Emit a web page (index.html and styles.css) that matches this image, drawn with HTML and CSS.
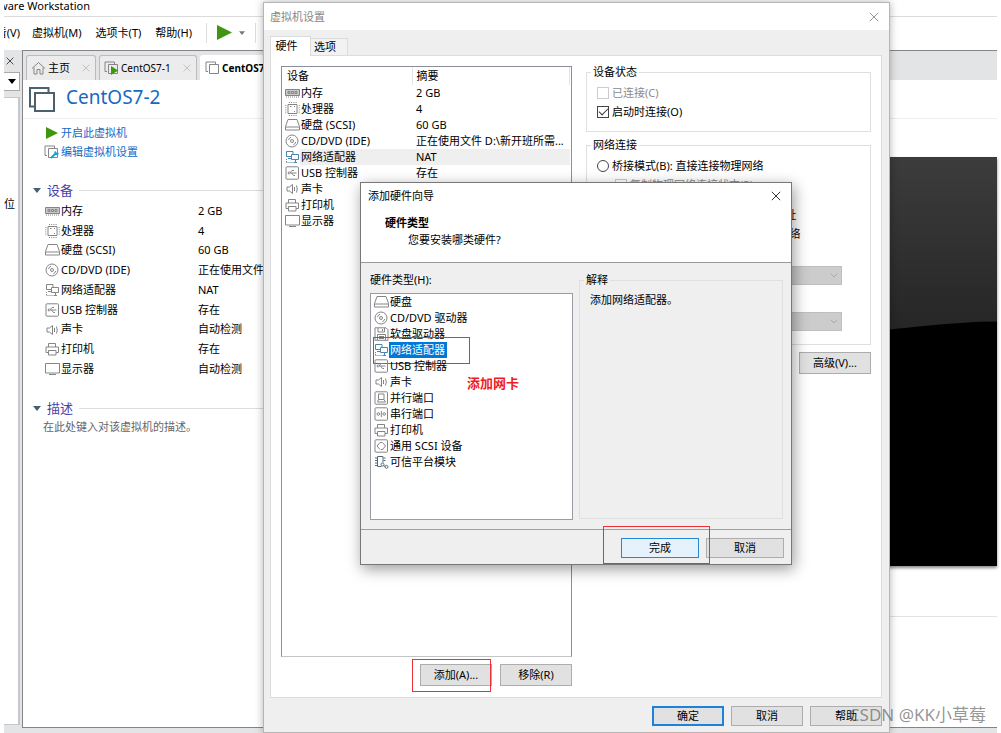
FILE: index.html
```html
<!DOCTYPE html>
<html lang="zh-CN">
<head>
<meta charset="utf-8">
<title>VMware Workstation</title>
<link rel="stylesheet" href="styles.css">
</head>
<body>
<svg class="defs" aria-hidden="true">
  <defs>
    <symbol id="i-mem" viewBox="0 0 15 14"><path d="M.5 3.500h14v6h-14z" fill="#c9c9c9"/><path d="M3 5.500h2v2h-2zM6.500 5.500h2v2h-2zM10 5.500h2v2h-2z"/><path d="M1 11h13" stroke-dasharray="1 1"/></symbol>
    <symbol id="i-cpu" viewBox="0 0 15 14"><path d="M3 2.500h9v9h-9z"/><path d="M4 .5h8M4 13.500h8M.8 3v9M14.200 3v9" stroke-dasharray="1 1.200"/><path d="M5 4.500h1.500M9 4.500h1M9 9.500h1"/></symbol>
    <symbol id="i-disk" viewBox="0 0 15 14"><path d="M3 1.500h9l2.500 7v3.500h-14v-3.500zM.5 9h14"/></symbol>
    <symbol id="i-cd" viewBox="0 0 15 14"><circle cx="7" cy="7" r="6"/><circle cx="7" cy="7" r="1.500"/><path d="M3.500 6a4 4 0 0 1 2.500-2.800M10.800 8a4 4 0 0 1-2.500 2.800"/></symbol>
    <symbol id="i-net" viewBox="0 0 15 14"><path d="M1.500 1.500h6.500v5h-6.500zM3 8.500h3M9 12.500h3M10.500 9.500v3"/><path d="M6.500 4.500h7v5h-7z" fill="#fff"/><path d="M1.500 9v4M1.500 12.500h7" stroke-dasharray="1 1"/></symbol>
    <symbol id="i-usb" viewBox="0 0 15 14"><rect x="1" y=".8" width="12.500" height="12.400" rx="1"/><path d="M3.500 7h8M5 7l2-2.500h2M6.500 7l2 2.500h1.500M4 5.500l-1 1.500 1 1.500"/></symbol>
    <symbol id="i-snd" viewBox="0 0 15 14"><path d="M2 5h2.500l3-2.500v9l-3-2.500h-2.500zM9.500 5v4M11.500 3.500q1.500 3.500 0 7"/></symbol>
    <symbol id="i-prt" viewBox="0 0 15 14"><path d="M3.500 5v-3.500h7v3.500M3.500 10.500h-2.500v-5.500h12.500v5.500h-2.500M3.500 8.500h7.500v4.500h-7.500z"/></symbol>
    <symbol id="i-mon" viewBox="0 0 15 14"><path d="M.5 1.500h14v9.500h-14zM4 12.500h7"/></symbol>
    <symbol id="i-flop" viewBox="0 0 15 14"><path d="M1 .8h11l2 2v10.500h-13zM4 1v4h6.500v-4M8.500 2v2M3.500 13v-5.500h8v5.500M5 9.500h5M5 11.500h5"/></symbol>
    <symbol id="i-par" viewBox="0 0 15 14"><rect x="1" y=".8" width="12.500" height="12.400" rx="1"/><path d="M4.500 3h5.500v5.500h-5.500zM4.500 8.500l-1 2.500h8l-1.500-2.500"/></symbol>
    <symbol id="i-ser" viewBox="0 0 15 14"><rect x="1" y=".8" width="12.500" height="12.400" rx="1"/><circle cx="4.300" cy="7" r="1.300"/><circle cx="10.200" cy="7" r="1.300"/><path d="M7.300 4v6"/></symbol>
    <symbol id="i-scsi" viewBox="0 0 15 14"><rect x="1" y=".8" width="12.500" height="12.400" rx="1"/><path d="M6 3.500l-3 3.500 3 3.500M8.500 3.500l3 3.500-3 3.500M6 3.500h2M7 10.500h2"/></symbol>
    <symbol id="i-tpm" viewBox="0 0 15 14"><path d="M3.500 1.500h5.500v6M3.500 1.500v10h4M1 3h2M1 5.500h2M1 8h2M1 10.500h2M9.500 3h2M9.500 5.500h2"/><circle cx="8.500" cy="9.500" r="1.500"/><path d="M9.500 10.500l2 1.200"/><circle cx="12.500" cy="11.800" r="1.500"/></symbol>
    <symbol id="i-vm" viewBox="0 0 15 14"><path d="M3 10.500h-2v-9.500h9.500v2M4.500 3.500h9v9h-9z"/></symbol>
    <symbol id="i-home" viewBox="0 0 15 14"><path d="M1 7.500l6.500-6 6.500 6M3 6.500v6.500h3v-4.500h3v4.500h3v-6.500"/></symbol>
    <symbol id="i-x" viewBox="0 0 10 10"><path d="M.8.8l8.400 8.400M9.200.8l-8.400 8.400"/></symbol>
    <symbol id="i-play" viewBox="0 0 14 14"><path d="M0 0l14 7-14 7z"/></symbol>
    <symbol id="i-down" viewBox="0 0 8 5"><path d="M0 0h8l-4 5z"/></symbol>
    <symbol id="i-chev" viewBox="0 0 8 5"><path d="M.7.7l3.300 3.300 3.300-3.300"/></symbol>
  </defs>
</svg>

<div class="app">
  <header class="title"><span class="title-text">VMware Workstation</span></header>
  <nav class="menu">
    <span class="menu-cut"><button>查看(V)</button></span>
    <button class="item">虚拟机(M)</button>
    <button class="item">选项卡(T)</button>
    <button class="item">帮助(H)</button>
    <span class="power">
      <button aria-label="开启"><svg class="play-lg"><use href="#i-play"/></svg></button>
      <button aria-label="电源选项"><svg class="caret grey"><use href="#i-down"/></svg></button>
    </span>
  </nav>

  <div class="work">
    <aside class="side">
      <button class="side-close" aria-label="关闭"><svg class="x-sm"><use href="#i-x"/></svg></button>
      <button class="side-drop" aria-label="搜索选项"><svg class="caret"><use href="#i-down"/></svg></button>
      <div class="side-panel">位</div>
    </aside>

    <main class="main">
      <div class="tabs">
        <div class="tab home"><svg class="ico"><use href="#i-home"/></svg><span>主页</span><svg class="x-sm pale"><use href="#i-x"/></svg></div>
        <div class="tab vm"><svg class="ico"><use href="#i-vm"/><path class="run" d="M7 5l7 4.500-7 4.500z"/></svg><span class="small">CentOS7-1</span><svg class="x-sm pale"><use href="#i-x"/></svg></div>
        <div class="tab on"><svg class="ico"><use href="#i-vm"/></svg><b class="small">CentOS7-2</b></div>
      </div>
      <div class="vm-head">
        <svg class="vm-logo" viewBox="0 0 26 25"><path d="M5 19.500h-4v-18.500h18.500v4"/><path d="M6 6h19v18h-19z"/></svg>
        <h1>CentOS7-2</h1>
      </div>
      <div class="vm-body">
        <div class="info">
          <div class="links">
            <a href="#"><svg class="play-sm"><use href="#i-play"/></svg>开启此虚拟机</a>
            <a href="#"><svg class="ico"><use href="#i-vm"/><path class="wrench" d="M7 13l5-5M11 6.500l1 2.500 2.500-.5"/></svg>编辑虚拟机设置</a>
          </div>
          <h2><svg class="caret slate"><use href="#i-down"/></svg>设备</h2>
          <table class="devs">
            <tr><td><svg class="ico"><use href="#i-mem"/></svg>内存</td><td>2 GB</td></tr>
            <tr><td><svg class="ico"><use href="#i-cpu"/></svg>处理器</td><td>4</td></tr>
            <tr><td><svg class="ico"><use href="#i-disk"/></svg>硬盘 (SCSI)</td><td>60 GB</td></tr>
            <tr><td><svg class="ico"><use href="#i-cd"/></svg>CD/DVD (IDE)</td><td>正在使用文件 D:\</td></tr>
            <tr><td><svg class="ico"><use href="#i-net"/></svg>网络适配器</td><td>NAT</td></tr>
            <tr><td><svg class="ico"><use href="#i-usb"/></svg>USB 控制器</td><td>存在</td></tr>
            <tr><td><svg class="ico"><use href="#i-snd"/></svg>声卡</td><td>自动检测</td></tr>
            <tr><td><svg class="ico"><use href="#i-prt"/></svg>打印机</td><td>存在</td></tr>
            <tr><td><svg class="ico"><use href="#i-mon"/></svg>显示器</td><td>自动检测</td></tr>
          </table>
          <h2><svg class="caret slate"><use href="#i-down"/></svg>描述</h2>
          <p class="desc">在此处键入对该虚拟机的描述。</p>
        </div>
        <div class="preview">
          <svg class="screen" viewBox="0 0 400 410" preserveAspectRatio="none">
            <defs><linearGradient id="glare" x1="0" y1="0" x2="0" y2="1"><stop offset="0" stop-color="#3c3c3c"/><stop offset="1" stop-color="#1a1a1a"/></linearGradient></defs>
            <path d="M0 0h400v410h-400z"/>
            <path fill="url(#glare)" d="M0 0h400v165q-50 0-250 50l-150 50z"/>
          </svg>
          <div class="rule"></div>
        </div>
      </div>
    </main>
  </div>
</div>

<section class="win settings" role="dialog" aria-label="虚拟机设置">
  <header class="win-title"><span>虚拟机设置</span><button aria-label="关闭"><svg class="x-md"><use href="#i-x"/></svg></button></header>
  <div class="win-tabs"><button class="wt on">硬件</button><button class="wt">选项</button></div>
  <div class="panel">
    <div class="left">
      <div class="hw">
        <table>
          <thead><tr><th>设备</th><th>摘要</th></tr></thead>
          <tbody>
            <tr><td><svg class="ico"><use href="#i-mem"/></svg>内存</td><td>2 GB</td></tr>
            <tr><td><svg class="ico"><use href="#i-cpu"/></svg>处理器</td><td>4</td></tr>
            <tr><td><svg class="ico"><use href="#i-disk"/></svg>硬盘 (SCSI)</td><td>60 GB</td></tr>
            <tr><td><svg class="ico"><use href="#i-cd"/></svg>CD/DVD (IDE)</td><td>正在使用文件 D:\新开班所需...</td></tr>
            <tr class="sel"><td><svg class="ico blue"><use href="#i-net"/></svg>网络适配器</td><td>NAT</td></tr>
            <tr><td><svg class="ico"><use href="#i-usb"/></svg>USB 控制器</td><td>存在</td></tr>
            <tr><td><svg class="ico"><use href="#i-snd"/></svg>声卡</td><td></td></tr>
            <tr><td><svg class="ico"><use href="#i-prt"/></svg>打印机</td><td></td></tr>
            <tr><td><svg class="ico"><use href="#i-mon"/></svg>显示器</td><td></td></tr>
          </tbody>
        </table>
      </div>
      <div class="row-btns">
        <span class="marked"><button class="btn">添加(A)...</button><i class="mark mark-add"></i></span>
        <button class="btn">移除(R)</button>
      </div>
    </div>
    <div class="right">
      <fieldset class="state">
        <legend>设备状态</legend>
        <label class="off"><input type="checkbox" disabled>已连接(C)</label>
        <label><input type="checkbox" checked>启动时连接(O)</label>
      </fieldset>
      <fieldset class="conn">
        <legend>网络连接</legend>
        <label><input type="radio" name="net">桥接模式(B): 直接连接物理网络</label>
        <label class="off sub"><input type="checkbox" disabled>复制物理网络连接状态(P)</label>
        <label><input type="radio" name="net" checked>NAT 模式(N):&nbsp; 用于共享主机的 IP 地址</label>
        <label><input type="radio" name="net">仅主机模式(H):&nbsp; 与主机共享的专用网络</label>
        <label><input type="radio" name="net" aria-label="自定义"></label>
        <span class="pick"><select disabled aria-label="特定虚拟网络"></select><svg><use href="#i-chev"/></svg></span>
        <label><input type="radio" name="net" aria-label="LAN 区段"></label>
        <span class="pick"><select disabled aria-label="LAN 区段"></select><svg><use href="#i-chev"/></svg></span>
      </fieldset>
      <div class="row-btns"><button class="btn" aria-label="LAN 区段"></button><button class="btn">高级(V)...</button></div>
    </div>
  </div>
  <footer class="win-foot"><button class="btn ok">确定</button><button class="btn">取消</button><button class="btn">帮助</button></footer>
</section>

<section class="win wizard" role="dialog" aria-label="添加硬件向导">
  <header class="wiz-head">
    <div class="wiz-title"><span>添加硬件向导</span><button aria-label="关闭"><svg class="x-md"><use href="#i-x"/></svg></button></div>
    <h3>硬件类型</h3>
    <p>您要安装哪类硬件?</p>
  </header>
  <div class="wiz-body">
    <div class="types">
      <div id="types-label" class="types-label">硬件类型(H):</div>
      <ul role="listbox" aria-labelledby="types-label">
        <li role="option"><svg class="ico"><use href="#i-disk"/></svg><span>硬盘</span></li>
        <li role="option"><svg class="ico"><use href="#i-cd"/></svg><span>CD/DVD 驱动器</span></li>
        <li role="option"><svg class="ico"><use href="#i-flop"/></svg><span>软盘驱动器</span></li>
        <li role="option" class="picked" aria-selected="true"><svg class="ico blue"><use href="#i-net"/></svg><span>网络适配器</span><i class="mark mark-net"></i></li>
        <li role="option"><svg class="ico"><use href="#i-usb"/></svg><span>USB 控制器</span></li>
        <li role="option"><svg class="ico"><use href="#i-snd"/></svg><span>声卡</span><strong class="note">添加网卡</strong></li>
        <li role="option"><svg class="ico"><use href="#i-par"/></svg><span>并行端口</span></li>
        <li role="option"><svg class="ico"><use href="#i-ser"/></svg><span>串行端口</span></li>
        <li role="option"><svg class="ico"><use href="#i-prt"/></svg><span>打印机</span></li>
        <li role="option"><svg class="ico"><use href="#i-scsi"/></svg><span>通用 SCSI 设备</span></li>
        <li role="option"><svg class="ico slate-line"><use href="#i-tpm"/></svg><span>可信平台模块</span></li>
      </ul>
    </div>
    <fieldset class="explain"><legend>解释</legend>添加网络适配器。</fieldset>
  </div>
  <footer class="wiz-foot">
    <span class="marked"><button class="btn hot">完成</button><i class="mark mark-done"></i></span>
    <button class="btn">取消</button>
  </footer>
</section>

<div class="watermark">CSDN @KK小草莓</div>
</body>
</html>
```
FILE: styles.css
```css
* { box-sizing: border-box; }
html, body { height: 100%; }
body {
  margin: 0;
  position: relative;
  overflow: hidden;
  background: #fff;
  color: #000;
  font: 11px/16px "Noto Sans", "Noto Sans CJK SC", sans-serif;
}
button, select, input { font: inherit; color: inherit; margin: 0; }
button { padding: 0; border: 0; background: none; white-space: nowrap; }
h1, h2, h3, p, ul { margin: 0; padding: 0; font-weight: normal; }
ul { list-style: none; }
table { border-collapse: collapse; }
td, th { padding: 0; text-align: left; font-weight: normal; white-space: nowrap; }
svg { display: block; flex: none; fill: none; stroke: #858585; }
.defs { position: absolute; width: 0; height: 0; }
.ico { width: 15px; height: 14px; }
.ico.blue { stroke: #4a86b4; }
.ico.slate-line { stroke: #566b7a; }
td .ico { display: inline-block; vertical-align: middle; margin: -2px 1px 0 0; }
.x-sm { width: 8px; height: 8px; stroke: #222; }
.x-sm.pale { stroke: #b8b8b8; }
.x-md { width: 10px; height: 10px; stroke: #333; }
.caret { width: 8px; height: 5px; fill: #000; stroke: none; }
.caret.grey { width: 6px; height: 4px; fill: #777; }
.caret.slate { fill: #46606e; }
.play-lg { width: 15px; height: 15px; fill: #3f9612; stroke: none; }
.play-sm { width: 14px; height: 12px; fill: #3f9612; stroke: none; }
.run { fill: #3f9612; stroke: none; }
.wrench { stroke: #12a5d8; stroke-width: 2; }

/* Main window */
.app { height: 100%; padding: 0 4px; display: flex; flex-direction: column; }
.title { height: 17px; border-bottom: 1px solid #dcdcdc; }
.title-text { display: flex; justify-content: flex-end; width: 86px; height: 13px; line-height: 12px; overflow: hidden; white-space: nowrap; }
.menu { display: flex; align-items: center; gap: 12px; height: 33px; padding-bottom: 2px; }
.menu-cut { display: flex; justify-content: flex-end; width: 16px; overflow: hidden; }
.item { padding-right: 2px; }
.power { display: flex; align-items: center; gap: 7px; height: 20px; padding: 0 10px; border: solid #ddd; border-width: 0 1px; }
.work { flex: 1; display: flex; min-height: 0; padding-bottom: 5px; background: #e3e4e6; }
.side { width: 16px; display: flex; flex-direction: column; padding-bottom: 3px; }
.side-close { height: 22px; padding: 0 0 0 2px; }
.side-drop { display: grid; place-items: center; height: 19px; border: 1px solid #aaa; border-left: 0; background: #fff; }
.side-panel { flex: 1; margin-top: 6px; padding-top: 98px; border: solid #c5c8cd; border-width: 1px 2px 1px 0; background: #fff; }
.main { flex: 1; min-width: 0; margin-left: 2px; display: flex; flex-direction: column; border: 1px solid #858589; border-right: 0; background: #fff; }
.tabs { display: flex; gap: 3px; height: 29px; padding: 4px 3px 0; background: #e3e4e6; }
.tab { display: flex; align-items: center; gap: 2px; padding: 0 5px 0 4px; border: 1px solid #bbb; border-bottom: 0; border-radius: 3px 3px 0 0; background: #ececec; white-space: nowrap; }
.tab .x-sm { margin-left: auto; }
.tab.home { width: 70px; }
.tab.vm { width: 98px; }
.tab.on { width: 110px; background: #fff; border-color: #fff; }
.small { font-size: 10px; }
.vm-head { display: flex; align-items: center; gap: 11px; height: 39px; padding-left: 6px; border-bottom: 1px solid #eee; }
.vm-logo { width: 26px; height: 25px; stroke: #4d606d; stroke-width: 2; }
h1 { font-size: 19px; line-height: 24px; color: #1668c7; padding-bottom: 4px; }
.vm-body { flex: 1; display: flex; }
.info { width: 300px; padding: 4px 0 0 10px; }
.links { display: flex; flex-direction: column; padding-left: 12px; }
.links a { display: flex; align-items: center; gap: 2px; height: 19px; color: #1668c7; text-decoration: none; white-space: nowrap; }
.links .ico { margin-right: 0; margin-left: -1px; }
h2 { display: flex; align-items: center; gap: 6px; font-size: 13px; line-height: 20px; color: #4a3fa8; }
h2::after { content: ""; flex: 1; height: 1px; background: #ddd; }
.links + h2 { margin-top: 19px; }
.devs { height: 178px; margin: 1px 0 19px 12px; }
.devs td:first-child { width: 153px; }
.desc { padding: 1px 0 0 10px; color: #666; }
.preview { flex: 1; padding-top: 38px; }
.screen { width: 100%; height: 409px; fill: #000; stroke: none; box-shadow: 0 2px 3px #888; }
.rule { margin-top: 50px; height: 1px; background: #e2e2e2; }

/* Dialogs */
.win { position: absolute; display: flex; flex-direction: column; background: #efefef; }
.btn { height: 22px; width: 72px; border: 1px solid #adadad; background: #e1e1e1; text-align: center; overflow: hidden; }
.btn.ok { border: 2px solid #1c83d9; }
.btn.hot { border: 1px solid #2488d8; background: #e5f1fb; }
.row-btns { display: flex; justify-content: flex-end; gap: 8px; }
.marked { position: relative; display: flex; }
.mark { position: absolute; border: 1px solid #ec3038; pointer-events: none; }

.settings { left: 263px; right: 111px; top: 2px; bottom: 0; border: 1px solid #b5b5b5; box-shadow: 0 0 8px rgba(0, 0, 0, .3); }
.win-title { display: flex; align-items: center; justify-content: space-between; height: 27px; padding: 0 10px 0 6px; background: #fff; color: #888; }
.win-title svg { stroke: #999; }
.win-tabs { display: flex; align-items: flex-end; height: 26px; margin: 0 0 -1px 6px; position: relative; }
.wt { width: 37px; height: 18px; border: 1px solid #dcdcdc; border-left: 0; background: #f2f2f2; padding-right: 8px; }
.wt.on { width: 41px; height: 20px; border-left: 1px solid #dcdcdc; border-bottom: 0; background: #fff; padding: 0 8px 2px 0; }
.panel { flex: 1; display: flex; gap: 14px; margin: 0 7px 0 6px; padding: 10px 10px 11px; border: 1px solid #dcdcdc; background: #fff; min-height: 0; }
.left { width: 291px; display: flex; flex-direction: column; gap: 7px; }
.hw { flex: 1; border: 1px solid #8b8f99; border-bottom-color: #c5c5c8; background: #fff; overflow: hidden; }
.hw table { width: 288px; table-layout: fixed; }
.hw th { height: 18px; padding-left: 4px; }
.hw th:first-child { width: 130px; padding-left: 5px; border-right: 1px solid #e5e5e5; }
.hw th:last-child { border-right: 1px solid #e5e5e5; }
.hw td { height: 16px; line-height: 16px; padding-left: 4px; }
.hw td:first-child { padding-left: 3px; }
.hw td .ico { vertical-align: top; margin-top: 1px; }
.sel { background: linear-gradient(to right, #fff 18px, #efefef 18px); }
.mark-add { inset: -5px 1px -6px -8px; }
.right { flex: 1; display: flex; flex-direction: column; }
fieldset { margin: 0; min-width: 0; border: 1px solid #dfdfdf; padding: 0 10px; }
legend { padding: 0 2px; margin-left: -6px; height: 16px; }
.state { height: 68px; margin-top: -2px; padding-top: 3px; }
.conn { height: 208px; margin-top: 5px; padding-top: 3px; }
.right .row-btns { margin-top: 7px; }
label { display: flex; align-items: center; gap: 3px; height: 19px; white-space: nowrap; }
.off { color: #8a8a8a; }
.sub { padding-left: 18px; margin-bottom: 11px; }
input[type="checkbox"], input[type="radio"] { appearance: none; display: grid; place-items: center; width: 12px; height: 12px; border: 1px solid #444; background: #fff; }
input[type="radio"] { border-radius: 50%; }
input:disabled { border-color: #ccc; }
input[type="checkbox"]:checked::after { content: ""; width: 8px; height: 4px; margin-top: -3px; border: solid #333; border-width: 0 0 1px 1px; transform: rotate(-45deg); }
input[type="radio"]:checked::after { content: ""; width: 6px; height: 6px; border-radius: 50%; background: #333; }
.pick { display: grid; height: 19px; margin: 4px 18px 4px 18px; align-items: center; }
.pick > * { grid-area: 1 / 1; }
.pick select { appearance: none; width: 100%; height: 19px; padding: 0 4px; border: 1px solid #bfbfbf; border-radius: 0; background: #ccc; opacity: 1; }
.pick svg { width: 8px; height: 5px; margin-right: 4px; justify-self: end; stroke: #aaa; }
.win-foot { display: flex; justify-content: flex-end; gap: 7px; padding: 8px 7px 6px; }
.win-foot .btn { height: 20px; }

.wizard { left: 360px; top: 182px; width: 432px; border: 1px solid #777; box-shadow: 2px 4px 14px rgba(0, 0, 0, .4); }
.wiz-head { height: 80px; background: #fff; border-bottom: 1px solid #999; }
.wiz-title { display: flex; justify-content: space-between; align-items: center; height: 26px; padding: 0 10px 0 7px; }
.wiz-head h3 { margin: 6px 0 0 24px; font-size: 11px; font-weight: bold; }
.wiz-head p { margin: 1px 0 0 47px; }
.wiz-body { display: flex; gap: 6px; padding: 9px 8px 9px 9px; }
.types { width: 203px; }
.types-label { height: 21px; }
.types ul { height: 227px; padding: 0 3px; border: 1px solid #999ca3; background: #fff; }
.types li { position: relative; display: flex; align-items: center; height: 16px; }
.types li span { padding: 0 2px 0 1px; line-height: 16px; }
.picked span { background: #0078d7; color: #fff; }
.mark-net { left: -1px; top: -5px; width: 97px; height: 27px; }
.note { position: absolute; left: 93px; top: 0; color: #f01c22; font-size: 13px; line-height: 18px; }
.explain { flex: 1; height: 247px; padding: 4px 10px; }
.wiz-foot { display: flex; justify-content: flex-end; gap: 7px; padding: 8px 7px 6px; border-top: 1px solid #a0a0a0; }
.wiz-foot .btn { width: 78px; height: 20px; }
.mark-done { inset: -12px -11px -6px -18px; }

.watermark { position: absolute; right: 15px; bottom: 6px; font-size: 17px; line-height: 24px; color: rgba(90, 90, 90, .65); white-space: nowrap; }
```
